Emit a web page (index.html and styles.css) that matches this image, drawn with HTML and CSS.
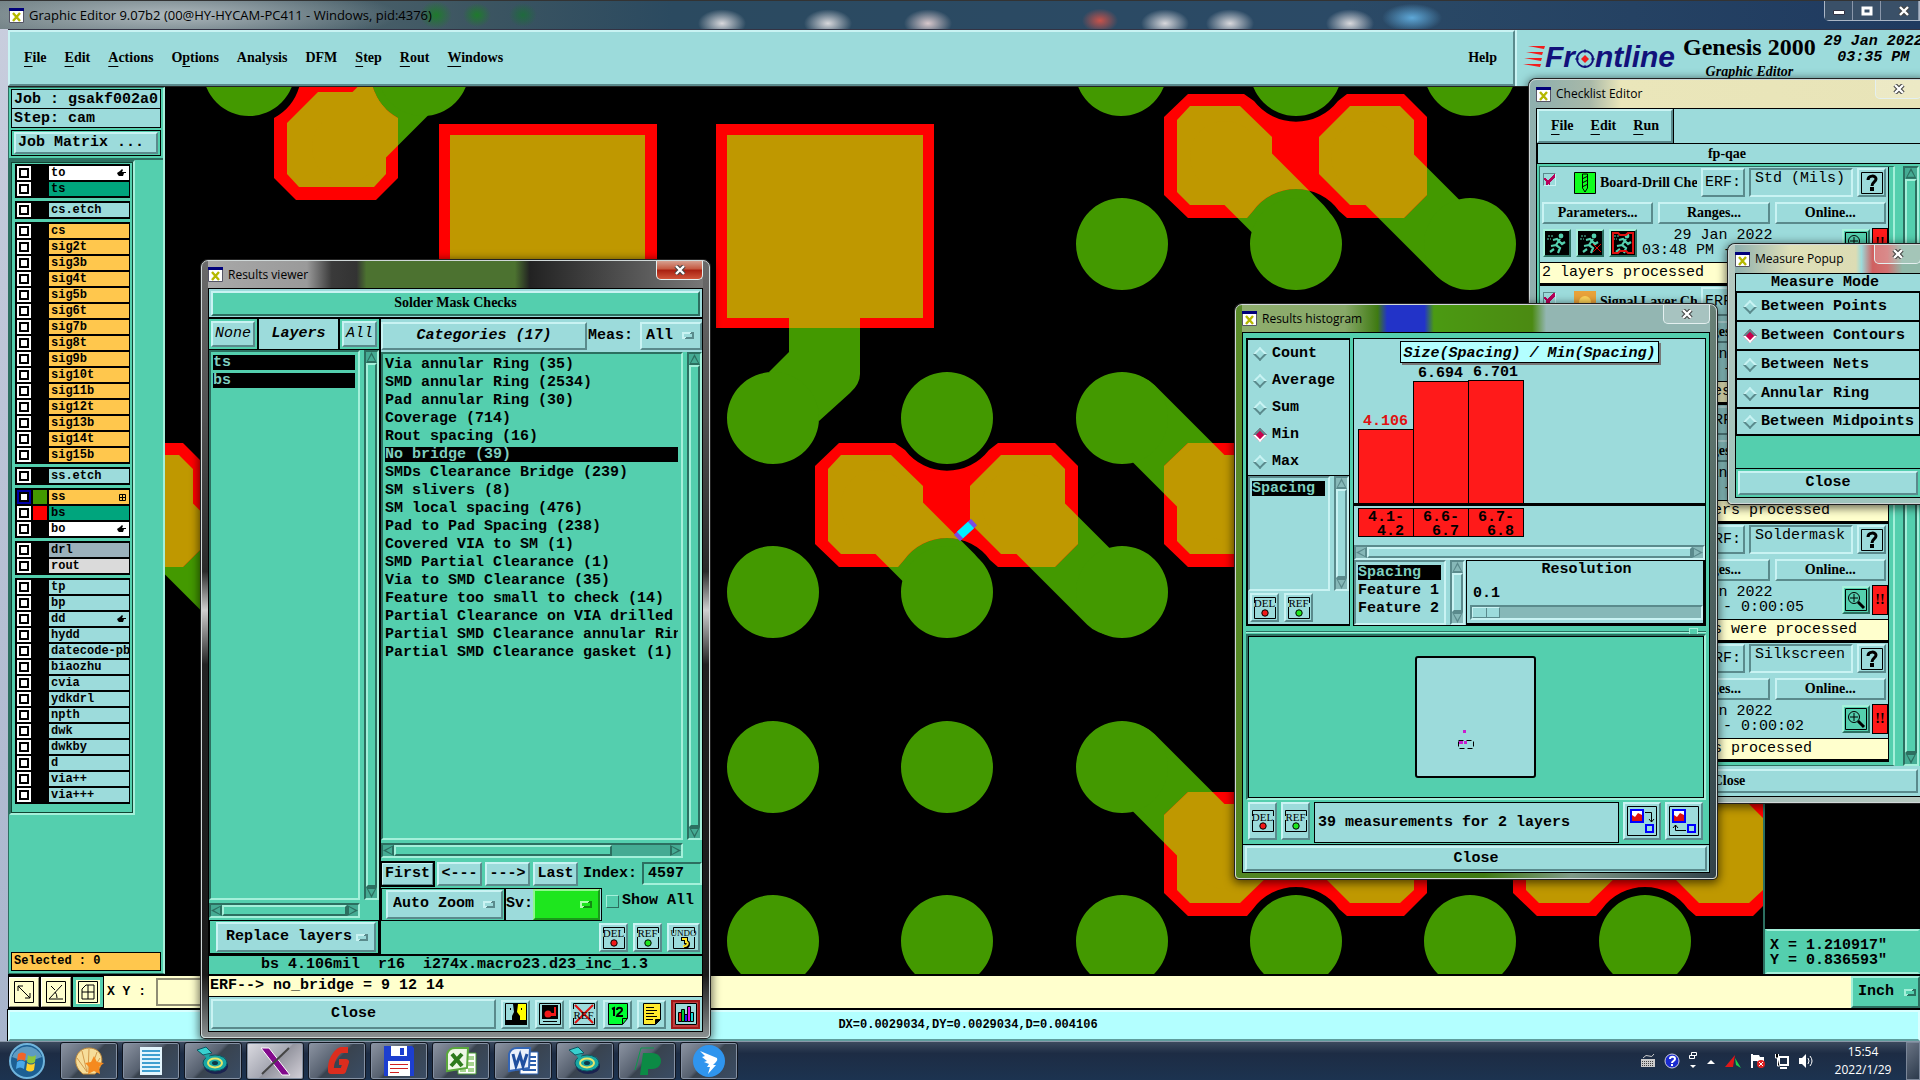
FILE: index.html
```html
<!DOCTYPE html>
<html lang="en">
<head>
    <meta charset="UTF-8">
    <meta name="viewport" content="width=device-width, initial-scale=1.0">
    <title>Graphic Editor 9.07b2</title>
    <link rel="stylesheet" href="styles.css">
</head>
<body>

    <!-- Shared icons -->
    <svg class="defs" aria-hidden="true">
        <symbol id="i-app" viewBox="0 0 15 15"><path fill="#fff" stroke="#556" d="M.5.5h14v14H.5z"/><path fill="#00007a" d="M0 0h15v3H0z"/><path stroke="#b5b800" stroke-width="2.4" d="M4 5l7 8M11 5l-7 8"/></symbol>
        <symbol id="i-x" viewBox="0 0 12 10"><path stroke="#444" stroke-width="4.5" d="M2 1l8 8M10 1L2 9"/><path stroke="#fff" stroke-width="2.4" d="M2 1l8 8M10 1L2 9"/></symbol>
        <symbol id="i-hand" viewBox="0 0 9 8"><path d="M0 4l3-2 2-2 1 1-1 2h4v1H7l-1 3H2L1 6z"/></symbol>
        <symbol id="i-grid" viewBox="0 0 7 7"><path fill="none" stroke="#000" d="M.5.5h6v6h-6zM3.5 0v7M0 3.5h7"/></symbol>
        <symbol id="i-dot" viewBox="0 0 22 22"><path fill="none" stroke="#000" d="M.5 6V.5h21V6M.5 10v11.5h21V10"/><circle cx="11" cy="16" r="3.2" fill="currentColor" stroke="#000"/></symbol>
        <symbol id="i-undo" viewBox="0 0 22 22"><path fill="none" stroke="#000" d="M.5 6V.5h21V6M.5 10v11.5h21V10"/><path fill="none" stroke="#000" stroke-width="4" d="M8 12h5v3c3 0 3 5-2 5"/><path fill="none" stroke="#ffe92e" stroke-width="2" d="M9 12h4v3c3 0 2 5-3 4"/></symbol>
        <symbol id="i-q" viewBox="0 0 22 22"><path fill="none" stroke="#000" d="M.5.5h21v21H.5z"/><path fill="none" stroke="#000" stroke-width="3" d="M7 8c0-5 8-5 8-1 0 3-4 3-4 7"/><path d="M9 15h4v4H9z"/></symbol>
        <symbol id="i-zoom" viewBox="0 0 22 22"><path fill="none" stroke="#000" d="M.5.5h21v21H.5z"/><circle cx="9" cy="9" r="5.5" fill="none" stroke="#000"/><path stroke="#000" d="M9 5v8M5 9h8"/><path stroke="#000" stroke-width="3" d="M13 13l6 6"/></symbol>
        <symbol id="i-run" viewBox="0 0 24 24"><path d="M0 0h24v24H0z"/><path fill="none" stroke="#54cfae" stroke-width="2.2" d="M15 8l-4 6-5 1M11 14l4 3-2 5M8 9l4-1 5 5 3-2M9 18l-4 3"/><circle cx="16" cy="5" r="2.4" fill="#54cfae"/><path stroke="#54cfae" stroke-dasharray="2 1" d="M3 5h6M2 8h4"/></symbol>
        <symbol id="i-run-sel" viewBox="0 0 24 24"><use href="#i-run"/><path stroke="#d00" fill="none" d="M15 13l8 8M23 13l-8 8"/></symbol>
        <symbol id="i-run-prof" viewBox="0 0 24 24"><use href="#i-run"/><path stroke="#e01010" fill="none" stroke-width="2" d="M2 2h5l2 2h6l2-2h5v20h-5l-2-2H9l-2 2H2z"/></symbol>
        <symbol id="i-drill" viewBox="0 0 22 22"><path fill="#0fff1d" stroke="#000" d="M.5.5h21v21H.5z"/><path fill="none" stroke="#000" d="M8.500 2h5v14l-2.500 4-2.500-4zM8 7l6-3M8 11l6-3M8 15l6-3"/></symbol>
        <symbol id="i-cd" viewBox="0 0 34 30"><ellipse cx="20" cy="20" rx="12" ry="8" fill="#1b2350"/><ellipse cx="19" cy="17" rx="12" ry="8" fill="#19a7a5" stroke="#0c5560"/><ellipse cx="19" cy="17" rx="7" ry="4.500" fill="none" stroke="#e6e66a" stroke-width="2"/><ellipse cx="19" cy="17" rx="3" ry="2" fill="#0c3a48"/><path fill="#38d0cf" stroke="#0c5560" d="M1 4l9-3 6 6-9 2z"/><path fill="#19a7a5" d="M8 9l6-1-2 6z"/></symbol>
    </svg>

    <main class="editor">
        <header class="titlebar">
            <svg class="app-icon"><use href="#i-app"/></svg>
            <span class="title-text">Graphic Editor 9.07b2 (00@HY-HYCAM-PC411 - Windows, pid:4376)</span>
            <div class="controls">
                <button type="button" aria-label="Minimize"><svg width="12" height="10"><path fill="#fff" stroke="#334" d="M.5 4.500h11v4H.5z"/></svg></button>
                <button type="button" aria-label="Maximize"><svg width="12" height="10"><path fill="none" stroke="#fff" stroke-width="3" d="M2 2h8v6H2z"/></svg></button>
                <button type="button" aria-label="Close"><svg width="12" height="10"><use href="#i-x"/></svg></button>
            </div>
        </header>

        <div class="topbar">
            <nav class="menubar">
                <a href="#"><u>F</u>ile</a>
                <a href="#"><u>E</u>dit</a>
                <a href="#"><u>A</u>ctions</a>
                <a href="#">O<u>p</u>tions</a>
                <a href="#">Analysis</a>
                <a href="#">DFM</a>
                <a href="#"><u>S</u>tep</a>
                <a href="#"><u>R</u>out</a>
                <a href="#"><u>W</u>indows</a>
                <a href="#" class="help">Help</a>
            </nav>
            <div class="brand">
                <div class="logo">
                    <svg width="22" height="24"><path fill="#f21c1c" d="M5 1h17l-1 3zM3 7h17l-1 3zM1 13h18l-1 3zM0 19h18l-1 3z"/></svg>
                    <span>Fr</span>
                    <svg class="target" width="20" height="22"><circle cx="10" cy="13" r="8" fill="none" stroke="#11117a" stroke-width="2"/><path stroke="#11117a" d="M10 3v19M0 13h20"/><circle cx="10" cy="13" r="6" fill="#9cdbdb"/><path fill="#f21c1c" d="M10 9l4 4-4 4-4-4z"/></svg>
                    <span>ntline</span>
                </div>
                <div class="product">
                    <strong>Genesis 2000</strong>
                    <em>Graphic Editor</em>
                </div>
                <div class="stamp">29 Jan 2022<br>03:35 PM</div>
            </div>
        </div>

        <div class="workspace">
            <aside class="sidebar">
                <div class="job-info">
                    <div class="job-line">Job : gsakf002a0</div>
                    <div class="job-line">Step: cam</div>
                    <div class="matrix-box"><button type="button" class="raised">Job Matrix ...</button></div>
                </div>
                <div class="layers">
                    <div class="group">
                        <label class="white"><input type="checkbox"><i></i><span>to</span><svg width="9" height="8"><use href="#i-hand"/></svg></label>
                        <label class="mask"><input type="checkbox"><i></i><span>ts</span></label>
                    </div>
                    <div class="group">
                        <label><input type="checkbox"><i></i><span>cs.etch</span></label>
                    </div>
                    <div class="group signal">
                        <label><input type="checkbox"><i></i><span>cs</span></label>
                        <label><input type="checkbox"><i></i><span>sig2t</span></label>
                        <label><input type="checkbox"><i></i><span>sig3b</span></label>
                        <label><input type="checkbox"><i></i><span>sig4t</span></label>
                        <label><input type="checkbox"><i></i><span>sig5b</span></label>
                        <label><input type="checkbox"><i></i><span>sig6t</span></label>
                        <label><input type="checkbox"><i></i><span>sig7b</span></label>
                        <label><input type="checkbox"><i></i><span>sig8t</span></label>
                        <label><input type="checkbox"><i></i><span>sig9b</span></label>
                        <label><input type="checkbox"><i></i><span>sig10t</span></label>
                        <label><input type="checkbox"><i></i><span>sig11b</span></label>
                        <label><input type="checkbox"><i></i><span>sig12t</span></label>
                        <label><input type="checkbox"><i></i><span>sig13b</span></label>
                        <label><input type="checkbox"><i></i><span>sig14t</span></label>
                        <label><input type="checkbox"><i></i><span>sig15b</span></label>
                    </div>
                    <div class="group">
                        <label><input type="checkbox"><i></i><span>ss.etch</span></label>
                    </div>
                    <div class="group">
                        <label class="orange"><input type="checkbox" checked><i class="on-green"></i><span>ss</span><svg width="7" height="7"><use href="#i-grid"/></svg></label>
                        <label class="mask"><input type="checkbox"><i class="on-red"></i><span>bs</span></label>
                        <label class="white"><input type="checkbox"><i></i><span>bo</span><svg width="9" height="8"><use href="#i-hand"/></svg></label>
                    </div>
                    <div class="group">
                        <label class="drill"><input type="checkbox"><i></i><span>drl</span></label>
                        <label class="rout"><input type="checkbox"><i></i><span>rout</span></label>
                    </div>
                    <div class="group">
                        <label><input type="checkbox"><i></i><span>tp</span></label>
                        <label><input type="checkbox"><i></i><span>bp</span></label>
                        <label><input type="checkbox"><i></i><span>dd</span><svg width="9" height="8"><use href="#i-hand"/></svg></label>
                        <label><input type="checkbox"><i></i><span>hydd</span></label>
                        <label><input type="checkbox"><i></i><span>datecode-pbd</span></label>
                        <label><input type="checkbox"><i></i><span>biaozhu</span></label>
                        <label><input type="checkbox"><i></i><span>cvia</span></label>
                        <label><input type="checkbox"><i></i><span>ydkdrl</span></label>
                        <label><input type="checkbox"><i></i><span>npth</span></label>
                        <label><input type="checkbox"><i></i><span>dwk</span></label>
                        <label><input type="checkbox"><i></i><span>dwkby</span></label>
                        <label><input type="checkbox"><i></i><span>d</span></label>
                        <label><input type="checkbox"><i></i><span>via++</span></label>
                        <label><input type="checkbox"><i></i><span>via+++</span></label>
                    </div>
                </div>
                <div class="selected">Selected : 0</div>
            </aside>

            <!-- Board canvas -->
            <svg class="board" viewBox="165 87 1599 887" preserveAspectRatio="xMinYMin slice">
                <defs>
                    <path id="pair" d="M24 0H80L90 7A53 53 0 0 0 174 7L183 0H240L263 23V101L240 124H183L175 117A53 53 0 0 0 89 117L83 124H24L0 101V23Z"/>
                    <path id="pads" d="M26 12H76L108 43V80L76 111H26L13 98V26ZM186 12H236L250 26V98L236 111H186L155 80V43Z"/>
                    <path id="single" d="M296 200H376L398 178V118A53 53 0 0 1 372 84H300A53 53 0 0 1 274 118V178Z"/>
                    <path id="smds" d="M439 124H657V328H439ZM716 124H934V328H716Z"/>
                    <g id="copper">
                        <path d="M450 135H645V318H450ZM727 135H923V318H727Z"/>
                        <path d="M789 310H860V374Q860 384 850 393L819 421L769 372L789 352Z"/>
                        <path d="M287 123L318 92H386V174L374 187H299L287 174Z"/>
                        <use href="#pads" x="815" y="443"/>
                        <use href="#pads" x="-57" y="443"/>
                        <use href="#pads" x="1164" y="94"/>
                        <use href="#pads" x="1164" y="443"/>
                        <use href="#pads" x="1164" y="792"/>
                        <use href="#pads" x="1513" y="792"/>
                        <path class="trace" d="M347 147L425 69M876 505L950 579M1017 505L1112 600M1225 156L1299 230M1366 156L1461 251M145 505L240 600M1225 505L1130 410M1225 854L1130 759"/>
                        <path class="via" d="M249 70h0M423 70h0M1121 70h0M1296 70h0M1470 70h0M1122 244h0M1296 244h0M1470 244h0M773 418h0M947 418h0M1122 418h0M773 592h0M947 592h0M1122 592h0M773 767h0M947 767h0M1122 767h0M773 941h0M947 941h0M1122 941h0M1296 941h0M1470 941h0M1645 941h0"/>
                    </g>
                    <clipPath id="openings">
                        <use href="#single"/>
                        <use href="#smds"/>
                        <use href="#pair" x="815" y="443"/>
                        <use href="#pair" x="-57" y="443"/>
                        <use href="#pair" x="1164" y="94"/>
                        <use href="#pair" x="1164" y="443"/>
                        <use href="#pair" x="1164" y="792"/>
                        <use href="#pair" x="1513" y="792"/>
                    </clipPath>
                </defs>
                <path fill="#000" d="M165 86H1764V974H165z"/>
                <use href="#copper" class="c-green"/>
                <g clip-path="url(#openings)">
                    <path fill="#f00" d="M165 86H1764V974H165z"/>
                    <use href="#copper" class="c-gold"/>
                </g>
                <path stroke="#7a4be0" stroke-width="9" d="M957 538L974 522"/>
                <path stroke="#00f0ff" stroke-width="9" d="M960 535L971 525"/>
            </svg>

            <aside class="overview">
                <div class="coords">X = 1.210917"<br>Y = 0.836593"</div>
            </aside>
        </div>

        <div class="command">
            <button type="button" class="tool" aria-label="Snap"><svg width="20" height="22"><path fill="none" stroke="#000" d="M.5.5h19v21H.5zM4 5l12 12M4 10V5h5M11 17h5v-5"/></svg></button>
            <button type="button" class="tool" aria-label="Angle"><svg width="20" height="22"><path fill="none" stroke="#000" d="M.5.5h19v21H.5zM3 18L16 4M3 18h14M5 5l4 4M11 17q0-4-2-6"/></svg></button>
            <button type="button" class="tool active" aria-label="Grid"><svg width="20" height="22"><path fill="none" stroke="#000" d="M.5.5h19v21H.5zM4 8l4-4h8v14H4zM10 4v14M4 11h12"/></svg></button>
            <label class="xy" for="xy">X Y :</label>
            <input id="xy" class="xy-input" type="text">
            <select class="opt green" aria-label="Units"><option>Inch</option></select>
        </div>
        <div class="status">DX=0.0029034,DY=0.0029034,D=0.004106</div>
    </main>

    <!-- Checklist editor -->
    <section class="window checklist">
        <header class="win-title">
            <svg class="app-icon"><use href="#i-app"/></svg><span>Checklist Editor</span>
            <button type="button" class="win-close" aria-label="Close"><svg width="12" height="10"><use href="#i-x"/></svg></button>
        </header>
        <div class="win-body">
            <nav class="check-menu raised">
                <a href="#"><u>F</u>ile</a>
                <a href="#"><u>E</u>dit</a>
                <a href="#"><u>R</u>un</a>
            </nav>
            <div class="check-name">fp-qae</div>
            <div class="check-main">
                <div class="check-list">
                    <article class="check">
                        <div class="check-head">
                            <input type="checkbox" checked aria-label="Board-Drill Checks">
                            <svg width="22" height="22"><use href="#i-drill"/></svg>
                            <b>Board-Drill Checks</b>
                            <button type="button" class="raised erf">ERF:</button>
                            <input type="text" class="sunken" value="Std (Mils)" aria-label="ERF model">
                            <button type="button" class="raised icon" aria-label="Help"><svg width="22" height="22"><use href="#i-q"/></svg></button>
                        </div>
                        <div class="check-buttons"><button type="button" class="raised">Parameters...</button><button type="button" class="raised">Ranges...</button><button type="button" class="raised">Online...</button></div>
                        <div class="check-status">
                            <button type="button" class="raised run" aria-label="Run"><svg width="24" height="24"><use href="#i-run"/></svg></button>
                            <button type="button" class="raised run" aria-label="Run on selected"><svg width="24" height="24"><use href="#i-run-sel"/></svg></button>
                            <button type="button" class="raised run" aria-label="Run in profile"><svg width="24" height="24"><use href="#i-run-prof"/></svg></button>
                            <p>29 Jan 2022<br>03:48 PM - 0:00:01</p>
                            <button type="button" class="raised run" aria-label="Results"><svg width="22" height="22"><use href="#i-zoom"/></svg></button>
                            <mark>!!</mark>
                        </div>
                        <div class="check-msg">2 layers processed</div>
                    </article>
                    <article class="check">
                        <div class="check-head">
                            <input type="checkbox" checked aria-label="Signal Layer Checks">
                            <svg width="22" height="22"><path fill="#e9a23a" d="M0 0h22v22H0z"/><circle cx="11" cy="11" r="6" fill="#ffd45a"/></svg>
                            <b>Signal Layer Checks</b>
                            <button type="button" class="raised erf">ERF:</button>
                            <input type="text" class="sunken" value="Outers" aria-label="ERF model">
                            <button type="button" class="raised icon" aria-label="Help"><svg width="22" height="22"><use href="#i-q"/></svg></button>
                        </div>
                        <div class="check-buttons"><button type="button" class="raised">Parameters...</button><button type="button" class="raised">Ranges...</button><button type="button" class="raised">Online...</button></div>
                        <div class="check-status">
                            <button type="button" class="raised run" aria-label="Run"><svg width="24" height="24"><use href="#i-run"/></svg></button>
                            <button type="button" class="raised run" aria-label="Run on selected"><svg width="24" height="24"><use href="#i-run-sel"/></svg></button>
                            <button type="button" class="raised run" aria-label="Run in profile"><svg width="24" height="24"><use href="#i-run-prof"/></svg></button>
                            <p>29 Jan 2022<br>03:48 PM - 0:00:09</p>
                            <button type="button" class="raised run" aria-label="Results"><svg width="22" height="22"><use href="#i-zoom"/></svg></button>
                            <mark>!!</mark>
                        </div>
                        <div class="check-msg">16 layers, 0 failures</div>
                    </article>
                    <article class="check">
                        <div class="check-head">
                            <input type="checkbox" checked aria-label="Power Ground Checks">
                            <svg width="22" height="22"><path fill="#e9a23a" d="M0 0h22v22H0z"/></svg>
                            <b>Power/Ground Checks</b>
                            <button type="button" class="raised erf">ERF:</button>
                            <input type="text" class="sunken" value="Mixed" aria-label="ERF model">
                            <button type="button" class="raised icon" aria-label="Help"><svg width="22" height="22"><use href="#i-q"/></svg></button>
                        </div>
                        <div class="check-buttons"><button type="button" class="raised">Parameters...</button><button type="button" class="raised">Ranges...</button><button type="button" class="raised">Online...</button></div>
                        <div class="check-status">
                            <button type="button" class="raised run" aria-label="Run"><svg width="24" height="24"><use href="#i-run"/></svg></button>
                            <button type="button" class="raised run" aria-label="Run on selected"><svg width="24" height="24"><use href="#i-run-sel"/></svg></button>
                            <button type="button" class="raised run" aria-label="Run in profile"><svg width="24" height="24"><use href="#i-run-prof"/></svg></button>
                            <p>29 Jan 2022<br>03:48 PM - 0:00:03</p>
                            <button type="button" class="raised run" aria-label="Results"><svg width="22" height="22"><use href="#i-zoom"/></svg></button>
                            <mark>!!</mark>
                        </div>
                        <div class="check-msg">No power/ground layers processed</div>
                    </article>
                    <article class="check">
                        <div class="check-head">
                            <input type="checkbox" checked aria-label="Solder Mask Checks">
                            <svg width="22" height="22"><path fill="#439900" d="M0 0h22v22H0z"/></svg>
                            <b>Solder Mask Checks</b>
                            <button type="button" class="raised erf">ERF:</button>
                            <input type="text" class="sunken" value="Soldermask" aria-label="ERF model">
                            <button type="button" class="raised icon" aria-label="Help"><svg width="22" height="22"><use href="#i-q"/></svg></button>
                        </div>
                        <div class="check-buttons"><button type="button" class="raised">Parameters...</button><button type="button" class="raised">Ranges...</button><button type="button" class="raised">Online...</button></div>
                        <div class="check-status">
                            <button type="button" class="raised run" aria-label="Run"><svg width="24" height="24"><use href="#i-run"/></svg></button>
                            <button type="button" class="raised run" aria-label="Run on selected"><svg width="24" height="24"><use href="#i-run-sel"/></svg></button>
                            <button type="button" class="raised run" aria-label="Run in profile"><svg width="24" height="24"><use href="#i-run-prof"/></svg></button>
                            <p>29 Jan 2022<br>03:52 PM - 0:00:05</p>
                            <button type="button" class="raised run" aria-label="Results"><svg width="22" height="22"><use href="#i-zoom"/></svg></button>
                            <mark>!!</mark>
                        </div>
                        <div class="check-msg">2 solder mask layers were processed</div>
                    </article>
                    <article class="check">
                        <div class="check-head">
                            <input type="checkbox" checked aria-label="Silk Screen Checks">
                            <svg width="22" height="22"><path fill="#fff" d="M0 0h22v22H0z"/></svg>
                            <b>Silk Screen Checks</b>
                            <button type="button" class="raised erf">ERF:</button>
                            <input type="text" class="sunken" value="Silkscreen" aria-label="ERF model">
                            <button type="button" class="raised icon" aria-label="Help"><svg width="22" height="22"><use href="#i-q"/></svg></button>
                        </div>
                        <div class="check-buttons"><button type="button" class="raised">Parameters...</button><button type="button" class="raised">Ranges...</button><button type="button" class="raised">Online...</button></div>
                        <div class="check-status">
                            <button type="button" class="raised run" aria-label="Run"><svg width="24" height="24"><use href="#i-run"/></svg></button>
                            <button type="button" class="raised run" aria-label="Run on selected"><svg width="24" height="24"><use href="#i-run-sel"/></svg></button>
                            <button type="button" class="raised run" aria-label="Run in profile"><svg width="24" height="24"><use href="#i-run-prof"/></svg></button>
                            <p>29 Jan 2022<br>03:52 PM - 0:00:02</p>
                            <button type="button" class="raised run" aria-label="Results"><svg width="22" height="22"><use href="#i-zoom"/></svg></button>
                            <mark>!!</mark>
                        </div>
                        <div class="check-msg">2 silk screen layers processed</div>
                    </article>
                </div>
                <div class="scroll-y"><b></b></div>
            </div>
            <div class="check-close"><button type="button" class="raised">Close</button></div>
        </div>
    </section>

    <!-- Measure popup -->
    <section class="window measure">
        <header class="win-title">
            <svg class="app-icon"><use href="#i-app"/></svg><span>Measure Popup</span>
            <button type="button" class="win-close" aria-label="Close"><svg width="12" height="10"><use href="#i-x"/></svg></button>
        </header>
        <div class="win-body">
            <div class="measure-head">Measure Mode</div>
            <div class="measure-list">
                <label><input type="radio" name="mode">Between Points</label>
                <label><input type="radio" name="mode" checked>Between Contours</label>
                <label><input type="radio" name="mode">Between Nets</label>
                <label><input type="radio" name="mode">Annular Ring</label>
                <label><input type="radio" name="mode">Between Midpoints</label>
            </div>
            <div class="measure-close"><button type="button" class="raised">Close</button></div>
        </div>
    </section>

    <!-- Results histogram -->
    <section class="window histogram">
        <header class="win-title">
            <svg class="app-icon"><use href="#i-app"/></svg><span>Results histogram</span>
            <button type="button" class="win-close" aria-label="Close"><svg width="12" height="10"><use href="#i-x"/></svg></button>
        </header>
        <div class="win-body">
            <div class="hist-top">
                <div class="hist-left">
                    <div class="hist-radios">
                        <label><input type="radio" name="stat">Count</label>
                        <label><input type="radio" name="stat">Average</label>
                        <label><input type="radio" name="stat">Sum</label>
                        <label><input type="radio" name="stat" checked>Min</label>
                        <label><input type="radio" name="stat">Max</label>
                    </div>
                    <div class="hist-list">
                        <ul class="listbox"><li class="sel">Spacing</li></ul>
                        <div class="scroll-y"><b></b></div>
                    </div>
                    <div class="icon-row">
                        <button type="button" class="raised icon tagged red"><svg width="22" height="22"><use href="#i-dot"/></svg><span>DEL</span></button>
                        <button type="button" class="raised icon tagged lime"><svg width="22" height="22"><use href="#i-dot"/></svg><span>REF</span></button>
                    </div>
                </div>
                <div class="hist-right">
                    <div class="chart">
                        <div class="chart-title">Size(Spacing) / Min(Spacing)</div>
                        <div class="bars">
                            <div class="bar current"><span>4.106</span><i style="height:74px"></i></div>
                            <div class="bar"><span>6.694</span><i style="height:122px"></i></div>
                            <div class="bar"><span>6.701</span><i style="height:123px"></i></div>
                        </div>
                        <div class="ranges">
                            <div>4.1-<br><span>4.2</span></div>
                            <div>6.6-<br><span>6.7</span></div>
                            <div>6.7-<br><span>6.8</span></div>
                        </div>
                        <div class="scroll-x"><b></b></div>
                    </div>
                    <div class="hist-opts">
                        <ul class="listbox"><li class="sel">Spacing</li><li>Feature 1</li><li>Feature 2</li></ul>
                        <div class="scroll-y"><b></b></div>
                        <div class="resolution">
                            <label for="res">Resolution</label>
                            <output for="res">0.1</output>
                            <input id="res" type="range" min="0" max="10" step="0.1" value="0">
                        </div>
                    </div>
                </div>
            </div>
            <div class="sash"><i></i></div>
            <div class="hist-map">
                <svg width="122" height="122"><rect x="1" y="1" width="119" height="120" rx="2" fill="#9cdbdb" stroke="#000" stroke-width="2"/><path fill="#c81ed0" d="M48 74h3v3h-3zM44 85h4v3h-4zM49 85h3v3h-3z"/><path fill="none" stroke="#000" stroke-dasharray="5 3" d="M43.500 84.500h15v8h-15z"/></svg>
            </div>
            <div class="hist-foot">
                <button type="button" class="raised icon tagged red"><svg width="22" height="22"><use href="#i-dot"/></svg><span>DEL</span></button>
                <button type="button" class="raised icon tagged lime"><svg width="22" height="22"><use href="#i-dot"/></svg><span>REF</span></button>
                <div class="hist-info">39 measurements for 2 layers</div>
                <button type="button" class="raised icon" aria-label="Copy to view"><svg width="30" height="30"><path fill="none" stroke="#000" d="M.5.5h29v29H.5z"/><path fill="#fff" stroke="#00f" stroke-width="2" d="M4 4h12v12H4z"/><path fill="#e01010" d="M5 9l3 2 3-4 4 2v6H5z"/><path fill="none" stroke="#00f" stroke-width="2" d="M19 19h7v7h-7z"/><path fill="none" stroke="#000" d="M18 6.500h6.500V16M22 13l2.500 3 2.500-3"/></svg></button>
                <button type="button" class="raised icon" aria-label="Copy from view"><svg width="30" height="30"><path fill="none" stroke="#000" d="M.5.5h29v29H.5z"/><path fill="#fff" stroke="#00f" stroke-width="2" d="M4 4h12v12H4z"/><path fill="#e01010" d="M5 9l3 2 3-4 4 2v6H5z"/><path fill="none" stroke="#00f" stroke-width="2" d="M19 19h7v7h-7z"/><path fill="none" stroke="#000" d="M17 24.500H6.500V19M4 22l2.500-3L9 22"/></svg></button>
            </div>
            <div class="hist-close"><button type="button" class="raised">Close</button></div>
        </div>
    </section>

    <!-- Results viewer -->
    <section class="window viewer">
        <header class="win-title">
            <svg class="app-icon"><use href="#i-app"/></svg><span>Results viewer</span>
            <button type="button" class="win-close danger" aria-label="Close"><svg width="12" height="10"><use href="#i-x"/></svg></button>
        </header>
        <div class="win-body">
            <div class="viewer-head"><div>Solder Mask Checks</div></div>
            <div class="viewer-cols">
                <div class="viewer-left">
                    <div class="left-tabs">
                        <div><button type="button" class="raised">None</button></div>
                        <strong>Layers</strong>
                        <div><button type="button" class="raised">All</button></div>
                    </div>
                    <div class="list-area">
                        <ul class="listbox"><li class="sel">ts</li><li class="sel">bs</li></ul>
                        <div class="scroll-y"><b></b></div>
                    </div>
                    <div class="scroll-x"><b></b></div>
                    <div class="replace"><select class="opt" aria-label="Layer mode"><option>Replace layers</option></select></div>
                </div>
                <div class="viewer-right">
                    <div class="right-tabs">
                        <button type="button" class="raised cats">Categories (17)</button>
                        <label for="meas">Meas:</label>
                        <select id="meas" class="opt"><option>All</option></select>
                    </div>
                    <div class="list-area">
                        <ul class="listbox">
                            <li>Via annular Ring (35)</li>
                            <li>SMD annular Ring (2534)</li>
                            <li>Pad annular Ring (30)</li>
                            <li>Coverage (714)</li>
                            <li>Rout spacing (16)</li>
                            <li class="sel">No bridge (39)</li>
                            <li>SMDs Clearance Bridge (239)</li>
                            <li>SM slivers (8)</li>
                            <li>SM local spacing (476)</li>
                            <li>Pad to Pad Spacing (238)</li>
                            <li>Covered VIA to SM (1)</li>
                            <li>SMD Partial Clearance (1)</li>
                            <li>Via to SMD Clearance (35)</li>
                            <li>Feature too small to check (14)</li>
                            <li>Partial Clearance on VIA drilled</li>
                            <li>Partial SMD Clearance annular Ring</li>
                            <li>Partial SMD Clearance gasket (1)</li>
                        </ul>
                        <div class="scroll-y"><b></b></div>
                    </div>
                    <div class="scroll-x"><b class="part"></b></div>
                    <div class="nav-row">
                        <button type="button" class="raised default">First</button>
                        <button type="button" class="raised">&lt;---</button>
                        <button type="button" class="raised">---&gt;</button>
                        <button type="button" class="raised">Last</button>
                        <label for="index">Index:</label>
                        <input id="index" class="sunken" type="text" value="4597">
                    </div>
                    <div class="zoom-row">
                        <div class="boxed"><select class="opt" aria-label="Zoom mode"><option>Auto Zoom</option></select></div>
                        <div class="boxed sv"><label for="sv">Sv:</label><select id="sv" class="opt lime-bg"><option></option></select></div>
                        <label class="show-all"><input type="checkbox">Show All</label>
                    </div>
                    <div class="icon-row end">
                        <button type="button" class="raised icon tagged red"><svg width="22" height="22"><use href="#i-dot"/></svg><span>DEL</span></button>
                        <button type="button" class="raised icon tagged lime"><svg width="22" height="22"><use href="#i-dot"/></svg><span>REF</span></button>
                        <button type="button" class="raised icon tagged wide"><svg width="22" height="22"><use href="#i-undo"/></svg><span>UNDO</span></button>
                    </div>
                </div>
            </div>
            <pre class="viewer-msg">bs 4.106mil  r16  i274x.macro23.d23_inc_1.3</pre>
            <div class="viewer-erf">ERF--&gt; no_bridge = 9 12 14</div>
            <div class="viewer-foot">
                <button type="button" class="raised close">Close</button>
                <button type="button" class="raised icon" aria-label="Compare"><svg width="22" height="22"><path fill="#ff0" d="M11 0h11v22H11z"/><path fill="none" stroke="#000" d="M.5.5h21v21H.5z"/><path d="M8 1h5l-1 8 3 4v4h7v5H0v-5h7v-4l2-4zM5 5h1v2H5zM16 5h1v2h-1z"/></svg></button>
                <button type="button" class="raised icon" aria-label="Camera"><svg width="22" height="22"><path fill="none" stroke="#000" d="M.5.5h21v21H.5z"/><path d="M3 2h16v14H3zM4 18h14v1H4z"/><circle cx="9" cy="11" r="3.500" fill="#f01818"/><path fill="#f01818" d="M15 4h2v9h-5v-3h3z"/></svg></button>
                <button type="button" class="raised icon tagged mid" aria-label="No reference"><svg width="22" height="22"><path fill="none" stroke="#000" d="M.5 6V.5h21V6M.5 15v6.500h21V15"/><path stroke="#e01010" stroke-width="2" d="M2 2l18 18M20 2L2 20"/></svg><span>REF</span></button>
                <button type="button" class="raised icon" aria-label="Count"><svg width="22" height="22"><path fill="#0f3" stroke="#000" d="M1.500.5h19v15l-5 6h-14z"/><path fill="none" stroke="#000" stroke-width="2" d="M5 6l2-1v8M10 7c0-3 5-3 5 0 0 2-4 3-5 6h6"/><path fill="none" stroke="#000" d="M20 15.500h-4.500V21"/></svg></button>
                <button type="button" class="raised icon" aria-label="Report"><svg width="22" height="22"><path fill="#ffe92e" stroke="#000" d="M2.500.5h17v16l-5 5h-12z"/><path stroke="#000" d="M5 4.500h8M5 7.500h11M5 10.500h8M5 13.500h11M5 16.500h7M14.500 21v-4.500h5"/></svg></button>
                <button type="button" class="raised icon pressed" aria-label="Histogram"><svg width="22" height="22"><path fill="none" stroke="#000" d="M.5.5h21v21H.5z"/><path fill="#f01818" stroke="#000" d="M3.500 9.500h3v9h-3z"/><path fill="#0c3" stroke="#000" d="M6.500 6.500h3v12h-3z"/><path fill="#22f" stroke="#000" d="M9.500 11.500h3v7h-3z"/><path fill="#e010e0" stroke="#000" d="M12.500 3.500h3v15h-3z"/><path fill="#1dd" stroke="#000" d="M15.500 9.500h3v9h-3z"/></svg></button>
            </div>
        </div>
    </section>

    <footer class="taskbar">
        <button type="button" class="start" aria-label="Start"><svg width="38" height="38"><circle cx="19" cy="19" r="17" fill="#1c5f93" stroke="#6fb4dc" stroke-width="2"/><path fill="#9fd8f2" opacity=".5" d="M4 15a16 16 0 0 1 30 0Q19 22 4 15"/><path fill="#f0642a" d="M10 12q4-3 8 0l-1 7q-4-3-8 0z"/><path fill="#8cc63c" d="M20 13q4 3 8 0l-1 7q-4 3-8 0z"/><path fill="#4aa8e8" d="M9 20q4-3 8 0l-1 7q-4-3-8 0z"/><path fill="#ffd028" d="M19 21q4 3 8 0l-1 7q-4 3-8 0z"/></svg></button>
        <nav class="tasks">
            <button type="button" aria-label="Shell"><svg width="34" height="30"><path fill="#f6dd9a" stroke="#c08a3a" d="M17 28h-6C-2 18 4 2 17 2s18 14 6 26z"/><path stroke="#d39b4e" d="M15 26L5 12M15 26L10 5M16 26l1-23M18 26l7-20M19 26l9-14"/><path fill="#f58a1f" d="M22 10l3 6 7 1-5 4 1 7-6-3-6 3 1-7-4-4 6-1z"/></svg></button>
            <button type="button" aria-label="Notepad"><svg width="34" height="30"><path fill="#e3f5fd" d="M6 1h22v28H6z"/><path stroke="#3f9fd0" stroke-width="2" d="M8 5h18M8 9h18M8 13h18M8 17h18M8 21h18M8 25h18"/></svg></button>
            <button type="button" aria-label="Genesis"><svg width="34" height="30"><use href="#i-cd"/></svg></button>
            <button type="button" class="on" aria-label="Exceed"><svg width="34" height="30"><path fill="#820a8c" stroke="#fff" d="M3 2h8l21 27h-8z"/><path stroke="#444" stroke-width="2" d="M31 2L4 28"/></svg></button>
            <button type="button" aria-label="G"><svg width="34" height="30"><path fill="none" stroke="#dc2d1e" stroke-width="6" stroke-linejoin="round" d="M28 4h-7c-5 2-11 11-10 21h12l3-9h-7"/></svg></button>
            <button type="button" aria-label="Total Commander"><svg width="34" height="30"><path fill="#1d3fd0" d="M2 0h28l2 2v28H2z"/><path fill="#fff" d="M9 0h16v10H9zM6 15h22v15H6z"/><path fill="#1d3fd0" d="M18 2h4v7h-4z"/><path stroke="#d02020" d="M8 18.500h18M8 22.500h18M8 26.500h9"/></svg></button>
            <button type="button" aria-label="Excel"><svg width="34" height="30"><path fill="#fff" stroke="#4b9a35" d="M14 7h18v21H14z"/><path fill="#a6d48f" d="M21 10h9v4h-9zM21 16h9v4h-9zM16 22h6v4h-6zM24 22h6v4h-6z"/><path fill="#eef7e6" stroke="#5aa83c" stroke-width="2" d="M3 8q2-6 8-6h13l-1 20-20 3z"/><path stroke="#2d7a1d" stroke-width="4" d="M8 8l10 12M18 8L7 20"/></svg></button>
            <button type="button" aria-label="Word"><svg width="34" height="30"><path fill="#fff" stroke="#2b5fad" d="M14 6h18v22H14z"/><path stroke="#2b5fad" stroke-width="2" d="M24 11h6M24 15h6M24 19h6M17 24h13"/><path fill="#eaf1fb" stroke="#3465b4" stroke-width="2" d="M3 8q2-6 8-6h13l-1 20-20 3z"/><path fill="none" stroke="#1f4f9f" stroke-width="3" d="M7 8l3 12 4-11 3 11 4-12"/></svg></button>
            <button type="button" aria-label="Genesis 2"><svg width="34" height="30"><use href="#i-cd"/></svg></button>
            <button type="button" aria-label="P"><svg width="34" height="30"><path fill="none" stroke="#0c9a4d" d="M5 24L11 2h13"/><path fill="#0c8a45" d="M13 7h9c12 0 12 16 0 16h-4v6h-8z"/></svg></button>
            <button type="button" aria-label="DingTalk"><svg width="34" height="34"><circle cx="17" cy="17" r="16" fill="#2f95ee"/><path fill="#fff" d="M8 7l17 7q1 2-1 4l-3 3h3l-8 9 2-7h-3l2-3-5-2 3-1-5-4 3-1z"/></svg></button>
        </nav>
        <div class="tray">
            <svg width="16" height="16"><path fill="#ccc" d="M1 6h14v8H1z"/><path stroke="#444" stroke-dasharray="1 1" d="M2 8.500h12M2 10.500h12M2 12.500h12"/><path fill="none" stroke="#ccc" d="M3 5q3-4 6-2t5-2"/></svg>
            <svg width="16" height="16"><circle cx="8" cy="8" r="7" fill="#1a2bd0" stroke="#ccd"/><path fill="none" stroke="#fff" stroke-width="2" d="M6 6c0-3 5-3 5 0 0 2-3 2-3 4M8 11v2"/></svg>
            <svg width="10" height="20"><path fill="none" stroke="#fff" d="M3.500 1.500h5v3h-5zM1.500 4.500h5v3h-5z"/><path fill="#fff" d="M2 14h6l-3 3z"/></svg>
            <svg width="10" height="16"><path fill="#fff" d="M1 11h8L5 7z"/></svg>
            <svg width="18" height="16"><path fill="#e01818" d="M1 14L11 2l-2 12z"/><path fill="#1fd048" d="M11 5l6 10-5-3z"/></svg>
            <svg width="16" height="16"><path stroke="#fff" stroke-width="2" d="M2 1v14"/><path fill="#fff" d="M3 2h6l1 2h4v5H8L7 8H3z"/><circle cx="11" cy="11" r="4" fill="#e02020"/><path stroke="#fff" d="M9 9l4 4M13 9l-4 4"/></svg>
            <svg width="16" height="16"><path fill="none" stroke="#fff" stroke-width="2" d="M5 4h9v8H5zM6 15h7"/><path stroke="#fff" d="M1.500 1v4h3V1M3.500 5v8h2"/></svg>
            <svg width="16" height="16"><path fill="#fff" d="M1 5h3l4-4v14l-4-4H1z"/><path fill="none" stroke="#fff" d="M10 5q2 3 0 6M12 3q4 5 0 10"/></svg>
            <time>15:54<br>2022/1/29</time>
            <i class="peek"></i>
        </div>
    </footer>

</body>
</html>
```
FILE: styles.css
```css
:root {
    --aqua: #9cdbdb;
    --aqua-hi: #c9f3f3;
    --aqua-lo: #5a8a8c;
    --green: #54cfae;
    --green-hi: #a4f0da;
    --green-lo: #2c6f60;
    --cream: #ffffcd;
    --mono: "Liberation Mono", "Courier New", monospace;
    --serif: "Liberation Serif", "Times New Roman", serif;
    --ui: "Open Sans", "Noto Sans", sans-serif;
}
* {
    box-sizing: border-box;
}
body {
    margin: 0;
    height: 100vh;
    display: flex;
    flex-direction: column;
    overflow: hidden;
    background: #000;
    color: #000;
    font: bold 15px/18px var(--mono);
}
button, input, select {
    font: inherit;
    color: inherit;
    margin: 0;
    padding: 0;
    border-radius: 0;
}
a {
    color: inherit;
    text-decoration: none;
}
u {
    text-underline-offset: 4px;
}
svg {
    display: block;
    flex: none;
}
ul {
    margin: 0;
    padding: 0;
    list-style: none;
}
.defs {
    position: absolute;
    width: 0;
    height: 0;
}
.raised {
    border: 2px solid;
    border-color: var(--aqua-hi) var(--aqua-lo) var(--aqua-lo) var(--aqua-hi);
    background: var(--aqua);
}
.sunken {
    border: 2px solid;
    border-color: var(--aqua-lo) var(--aqua-hi) var(--aqua-hi) var(--aqua-lo);
    background: var(--aqua);
}

/* Main window */
.editor {
    flex: 1;
    min-height: 0;
    display: flex;
    flex-direction: column;
    padding-left: 8px;
    background: linear-gradient(#c9cede, #a8b4cc);
}
.titlebar {
    height: 29px;
    margin-left: -8px;
    padding-left: 9px;
    display: flex;
    align-items: center;
    gap: 5px;
    border-top: 1px solid #333;
    background:
        radial-gradient(ellipse 230px 30px at 170px 50%, #b9c2c6e0, transparent),
        radial-gradient(ellipse 16px 14px at 436px 50%, #1f7a2d, transparent),
        radial-gradient(ellipse 14px 12px at 477px 50%, #1f7a2d, transparent),
        radial-gradient(ellipse 14px 12px at 523px 50%, #1f6a3d, transparent),
        radial-gradient(ellipse 24px 14px at 722px 80%, #d8d8dc, transparent),
        radial-gradient(ellipse 24px 14px at 828px 80%, #d8d8dc, transparent),
        radial-gradient(ellipse 24px 14px at 928px 80%, #d8c8cc, transparent),
        radial-gradient(ellipse 18px 12px at 1100px 70%, #c8524a, transparent),
        radial-gradient(ellipse 24px 14px at 1165px 80%, #d8d8dc, transparent),
        radial-gradient(ellipse 24px 14px at 1230px 80%, #d8d8dc, transparent),
        radial-gradient(ellipse 24px 14px at 1350px 80%, #d8d8dc, transparent),
        radial-gradient(ellipse 30px 14px at 1412px 60%, #5ea8d8, transparent),
        linear-gradient(90deg, #6c7c80, #3c5561 25%, #2b4a60 35%, #2b4a66 70%, #1f3a60);
    font: 13px/16px var(--ui);
}
.app-icon {
    width: 15px;
    height: 15px;
}
.controls {
    align-self: flex-start;
    margin-left: auto;
    display: flex;
    height: 20px;
    border: 1px solid #aab6c6;
    border-top: 0;
    border-radius: 0 0 0 5px;
}
.controls button {
    width: 28px;
    border: 0;
    border-right: 1px solid #8a97aa;
    background: #3a5068;
    display: flex;
    align-items: center;
    justify-content: center;
}
.controls button:last-child {
    width: 38px;
    padding-left: 8px;
}
.topbar {
    display: flex;
    height: 57px;
    background: var(--aqua);
    border-top: 1px solid #334;
}
.menubar {
    flex: 1;
    display: flex;
    align-items: center;
    gap: 18px;
    padding: 0 16px 0 14px;
    border: 2px solid;
    border-color: var(--aqua-hi) var(--aqua-lo) var(--aqua-lo) var(--aqua-hi);
    font: bold 14px/18px var(--serif);
}
.menubar .help {
    margin-left: auto;
}
.brand {
    width: 405px;
    padding: 4px 0 0 6px;
    border-left: 2px solid var(--aqua-hi);
    display: flex;
    overflow: hidden;
    white-space: nowrap;
}
.logo {
    display: flex;
    align-items: center;
    height: 46px;
    color: #11117a;
    font: italic bold 30px/46px "Liberation Sans", Arial, sans-serif;
}
.product {
    margin-left: 8px;
    display: flex;
    flex-direction: column;
    align-items: center;
    font-family: var(--serif);
}
.product strong {
    font-size: 24px;
    line-height: 26px;
}
.product em {
    font-size: 14px;
    line-height: 24px;
}
.stamp {
    margin-left: 8px;
    font-style: italic;
    line-height: 16px;
    text-align: center;
}
.workspace {
    flex: 1;
    min-height: 0;
    display: flex;
    border-top: 1px solid #222;
}

/* Sidebar */
.sidebar {
    width: 157px;
    flex: none;
    display: flex;
    flex-direction: column;
    background: var(--green);
    border: 1px solid var(--green-lo);
    border-right: 2px solid var(--green-hi);
    overflow: hidden;
    white-space: nowrap;
}
.job-info {
    padding: 1px 2px 2px;
    border-bottom: 2px solid var(--green-lo);
}
.job-line {
    height: 20px;
    padding-left: 2px;
    margin-bottom: -1px;
    border: 1px solid #000;
    background: var(--aqua);
    line-height: 20px;
}
.matrix-box {
    margin-top: 3px;
    padding: 1px 2px;
    border: 1px solid #000;
}
.matrix-box button {
    display: block;
    width: 100%;
    height: 22px;
    padding-left: 2px;
    text-align: left;
    line-height: 16px;
}
.layers {
    width: 126px;
    padding: 2px 3px 9px 4px;
    border: 2px solid;
    border-color: var(--green-lo) var(--green-hi) var(--green-hi) var(--green-lo);
    outline: 1px solid #143;
    outline-offset: -3px;
    display: flex;
    flex-direction: column;
    gap: 3px;
    font: bold 12px/14px var(--mono);
}
.group {
    padding: 1px 1px 1px 2px;
    background: #000;
}
.group label {
    height: 16px;
    display: flex;
    align-items: center;
    gap: 2px;
    --fill: var(--aqua);
    position: relative;
}
.group.signal label, .group label.orange { --fill: #ffc74d; }
.group label.white { --fill: #fff; }
.group label.mask { --fill: #00a57d; }
.group label.drill { --fill: #9bb0bb; }
.group label.rout { --fill: #dadada; }
.group input {
    appearance: none;
    flex: none;
    width: 14px;
    height: 14px;
    border: 2px solid #fff;
    outline: 2px solid #000;
    outline-offset: -4px;
    background: #fff;
}
.group input:checked {
    border-color: #0000a8;
}
.group i {
    flex: none;
    width: 14px;
    height: 14px;
}
.on-green { background: #439900; }
.on-red { background: #f00; }
.group span {
    flex: 1;
    min-width: 0;
    height: 14px;
    padding-left: 2px;
    overflow: hidden;
    background: var(--fill);
}
.group label svg {
    position: absolute;
    right: 3px;
}
.selected {
    margin: auto 2px 2px;
    height: 19px;
    padding-left: 2px;
    border: 1px solid #000;
    background: #ffc74d;
    font: bold 12px/17px var(--mono);
}

/* Board */
.board {
    flex: 1;
    min-width: 0;
    height: 100%;
    background: #000;
}
.c-green {
    fill: #439900;
    stroke: #439900;
    stroke-width: 0;
}
.c-gold {
    fill: #bf9800;
    stroke: #bf9800;
    stroke-width: 0;
}
.trace {
    fill: none;
    stroke-width: 70px;
    stroke-linecap: round;
}
.via {
    stroke-width: 92px;
    stroke-linecap: round;
}
.overview {
    width: 157px;
    flex: none;
    display: flex;
    flex-direction: column;
    justify-content: flex-end;
    border-left: 2px solid var(--green-lo);
    background: #000;
}
.coords {
    height: 45px;
    padding: 7px 3px;
    border: 2px solid;
    border-color: var(--green-hi) transparent var(--green-hi) var(--green);
    background: var(--green);
    line-height: 15px;
}

/* Command line and status */
.command {
    height: 36px;
    display: flex;
    align-items: center;
    border-top: 2px solid #000;
    border-bottom: 2px solid #000;
    background: var(--cream);
}
.tool {
    width: 32px;
    height: 32px;
    border: 2px solid;
    border-color: #fff #98967a #98967a #fff;
    outline: 1px solid #000;
    outline-offset: -1px;
    background: var(--cream);
    display: flex;
    align-items: center;
    justify-content: center;
}
.tool.active {
    border: 4px solid var(--green);
}
.xy {
    padding: 0 10px 0 3px;
    font-size: 13px;
}
.xy-input {
    width: 300px;
    height: 28px;
    border: 2px solid #8f8d74;
    background: var(--cream);
}
.command .opt {
    margin-left: auto;
    width: 69px;
    height: 32px;
}
.status {
    height: 31px;
    padding-left: 8px;
    border: 2px solid;
    border-color: #d9ffff #d9ffff #5f9c9c #d9ffff;
    outline: 1px solid #000;
    background: #b3ffff;
    text-align: center;
    font: bold 12px/26px var(--mono);
}

/* Drop-downs and scrollbars */
.opt {
    appearance: none;
    height: 30px;
    padding-left: 8px;
    border: 2px solid;
    border-color: var(--aqua-hi) var(--aqua-lo) var(--aqua-lo) var(--aqua-hi);
    background:
        linear-gradient(var(--aqua), var(--aqua)) right 8px center / 8px 3px no-repeat,
        linear-gradient(135deg, var(--aqua-hi) 50%, var(--aqua-lo) 50%) right 6px center / 12px 7px no-repeat,
        var(--aqua);
}
.opt.green {
    padding-left: 5px;
    border-color: var(--green-hi) var(--green-lo) var(--green-lo) var(--green-hi);
    background:
        linear-gradient(var(--green), var(--green)) right 4px center / 8px 3px no-repeat,
        linear-gradient(135deg, var(--green-hi) 50%, var(--green-lo) 50%) right 2px center / 12px 7px no-repeat,
        var(--green);
}
.opt.lime-bg {
    border-color: #8df88d #1a9a1a #1a9a1a #8df88d;
    background:
        linear-gradient(#1ee61e, #1ee61e) right 8px center / 8px 3px no-repeat,
        linear-gradient(135deg, #b0ffb0 50%, #128a12 50%) right 6px center / 12px 7px no-repeat,
        #1ee61e;
}
.scroll-y, .scroll-x {
    --face: var(--green);
    --hi: var(--green-hi);
    --lo: var(--green-lo);
    flex: none;
    display: flex;
    align-items: center;
    justify-content: space-between;
    border: 2px solid;
    border-color: var(--lo) var(--hi) var(--hi) var(--lo);
    background: #45ab93;
}
.scroll-y {
    width: 15px;
    flex-direction: column;
}
.scroll-x {
    height: 15px;
}
.scroll-y::before, .scroll-y::after, .scroll-x::before, .scroll-x::after {
    content: "";
    flex: none;
    width: 11px;
    height: 11px;
    background: var(--lo);
}
.scroll-y::before { clip-path: polygon(50% 0, 100% 100%, 0 100%, 50% 0, 50% 3px, 2px 9px, 9px 9px, 50% 3px); }
.scroll-y::after { clip-path: polygon(50% 100%, 100% 0, 0 0, 50% 100%, 50% 8px, 2px 2px, 9px 2px, 50% 8px); }
.scroll-x::before { clip-path: polygon(0 50%, 100% 100%, 100% 0, 0 50%, 3px 50%, 9px 2px, 9px 9px, 3px 50%); }
.scroll-x::after { clip-path: polygon(100% 50%, 0 100%, 0 0, 100% 50%, 8px 50%, 2px 2px, 2px 9px, 8px 50%); }
.scroll-y b, .scroll-x b {
    flex: 1;
    align-self: stretch;
    border: 2px solid;
    border-color: var(--hi) var(--lo) var(--lo) var(--hi);
    background: var(--face);
}
.scroll-x b.part {
    flex: 0 0 73%;
    margin-right: auto;
}
.histogram .scroll-y, .histogram .scroll-x {
    --face: var(--aqua);
    --hi: var(--aqua-hi);
    --lo: var(--aqua-lo);
    background: #86b8b8;
}

/* Glass windows */
.window {
    position: absolute;
    display: flex;
    flex-direction: column;
    padding: 0 6px 5px;
    border: 1px solid #d0d8d8;
    border-radius: 7px 7px 4px 4px;
    box-shadow: 0 0 0 1px #222, 0 2px 10px 2px #0009;
}
.win-title {
    height: 27px;
    flex: none;
    display: flex;
    align-items: center;
    gap: 5px;
    font: 12px/16px var(--ui);
}
.win-close {
    align-self: flex-start;
    margin-left: auto;
    width: 47px;
    height: 19px;
    border: 1px solid #e4f0f0;
    border-top: 0;
    border-radius: 0 0 5px 5px;
    background: #ffffff30;
    display: flex;
    align-items: center;
    justify-content: center;
}
.win-close.danger {
    background: linear-gradient(#d6a090, #c4573f 45%, #a81f10 50%, #d0553a);
}
.win-body {
    flex: 1;
    min-height: 0;
    display: flex;
    flex-direction: column;
    border: 1px solid #000;
    background: var(--green);
}
.listbox {
    flex: 1;
    min-width: 0;
    overflow: hidden;
    white-space: nowrap;
    border: 2px solid;
    border-color: var(--green-lo) var(--green-hi) var(--green-hi) var(--green-lo);
    padding: 3px 3px 0 2px;
}
.listbox li {
    height: 15px;
    margin-bottom: 3px;
    line-height: 15px;
    overflow: hidden;
}
.listbox .sel {
    background: #000;
    color: #7fcfc0;
}
.icon-row {
    display: flex;
    gap: 5px;
}
.icon-row.end {
    justify-content: flex-end;
}
.icon {
    width: 29px;
    height: 29px;
    flex: none;
    position: relative;
    display: flex;
    align-items: center;
    justify-content: center;
}
.tagged span {
    position: absolute;
    top: 3px;
    left: 0;
    right: 0;
    font: 11px/10px var(--serif);
}
.tagged.mid span { top: 8px; }
.tagged.red { color: #f01818; }
.tagged.lime { color: #1ee61e; }
.tagged span { color: #000; }
.tagged.wide { width: 33px; }
.tagged.wide span { font-size: 9px; }
.pressed { border-color: #a01818; background: #c04040; }
.pressed svg { background: var(--aqua); }

/* Results viewer */
.viewer {
    left: 201px;
    top: 260px;
    width: 509px;
    height: 778px;
    background: linear-gradient(#6a6a6a, #505050 20%, #2a2a2a 40%, #cfcfcf 45%, #222 52%, #1a1a1a 92%, #8a9090);
}
.viewer .win-title {
    background: linear-gradient(90deg, #a8a8a8, #9a9a9a 20%, #3a3a3a 25%, #333 30%, #4c7230 32%, #4c7230 62%, #222 65%, #777);
}
.viewer-head {
    padding: 2px;
    height: 30px;
    background: var(--aqua);
    border-bottom: 2px solid #000;
    font: bold 14px/20px var(--serif);
    text-align: center;
}
.viewer-head div {
    height: 25px;
    border: 2px solid;
    border-color: var(--aqua-hi) var(--green-lo) var(--green-lo) var(--aqua-hi);
    background: var(--green);
}
.viewer-cols {
    flex: 1;
    min-height: 0;
    display: grid;
    grid-template-columns: 172px 1fr;
}
.viewer-left, .viewer-right {
    min-width: 0;
    min-height: 0;
    display: flex;
    flex-direction: column;
}
.viewer-left {
    border-right: 2px solid #000;
}
.left-tabs {
    height: 31px;
    display: flex;
    border-bottom: 1px solid #000;
}
.left-tabs div {
    padding: 2px;
}
.left-tabs button {
    height: 26px;
    padding: 0 2px;
    font-weight: normal;
    font-style: italic;
}
.left-tabs strong {
    flex: 1;
    border: solid #000;
    border-width: 0 2px;
    background: var(--aqua);
    font-style: italic;
    line-height: 30px;
    text-align: center;
}
.list-area {
    flex: 1;
    min-height: 0;
    display: flex;
    gap: 4px;
}
.viewer .scroll-x {
    margin: 3px 19px 2px 0;
}
.replace {
    padding: 1px 2px 1px 6px;
    border: 1px solid #000;
}
.replace .opt {
    display: block;
    width: 100%;
}
.right-tabs {
    height: 33px;
    display: flex;
    align-items: center;
    background: var(--aqua);
}
.cats {
    width: 206px;
    height: 28px;
    font-style: italic;
}
.right-tabs label {
    flex: 1;
    padding-left: 1px;
}
.right-tabs .opt {
    width: 62px;
    height: 28px;
    padding-left: 4px;
}
.nav-row {
    display: flex;
    align-items: center;
    gap: 3px;
    height: 27px;
}
.nav-row button {
    width: 45px;
    height: 24px;
    line-height: 18px;
}
.nav-row .default {
    width: 53px;
    outline: 2px solid #000;
    outline-offset: -1px;
}
.nav-row input {
    flex: 1;
    min-width: 0;
    height: 23px;
    padding-left: 4px;
    border-color: var(--green-lo) var(--green-hi) var(--green-hi) var(--green-lo);
    background: var(--green);
}
.nav-row label {
    padding: 0 2px;
}
.zoom-row {
    display: flex;
    align-items: center;
    height: 34px;
}
.boxed {
    height: 33px;
    padding: 1px 1px 1px 4px;
    border: 1px solid #000;
    display: flex;
    align-items: center;
}
.boxed .opt {
    width: 117px;
    height: 29px;
    padding-left: 5px;
}
.boxed.sv {
    padding-left: 0;
    background: var(--aqua);
}
.boxed.sv .opt {
    width: 67px;
    height: 31px;
}
.show-all {
    display: flex;
    align-items: center;
    gap: 3px;
    padding: 0 0 6px 4px;
}
.show-all input {
    appearance: none;
    width: 13px;
    height: 13px;
    border: 1px solid;
    border-color: var(--green-hi) var(--green-lo) var(--green-lo) var(--green-hi);
}
.viewer .icon-row {
    height: 33px;
    align-items: center;
    padding-right: 2px;
}
.viewer-msg {
    margin: 0;
    height: 22px;
    padding-left: 52px;
    border-top: 2px solid #000;
    border-bottom: 2px solid #000;
    font: inherit;
}
.viewer-erf {
    height: 21px;
    padding-left: 1px;
    border-bottom: 1px solid #000;
    background: var(--cream);
    line-height: 20px;
}
.viewer-foot {
    height: 34px;
    padding: 2px;
    display: flex;
    align-items: center;
    gap: 5px;
    background: var(--aqua);
}
.viewer-foot .close {
    flex: 1;
    height: 30px;
}

/* Results histogram */
.histogram {
    left: 1235px;
    top: 304px;
    width: 482px;
    height: 575px;
    background: linear-gradient(100deg, #5a8a2a, #3f7a12 60%, #7f9a88 75%, #304048);
}
.histogram .win-title {
    background: linear-gradient(90deg, #8fae6e, #87a868 22%, #3f7a12 29%, #2233c8 31%, #2233c8 39%, #4b9a12 41%, #4b8a12 62%, #93b6b2 65%, #93b6b2);
}
.histogram .win-body {
    padding: 5px 3px 0;
}
.hist-top {
    display: flex;
    gap: 3px;
    height: 288px;
}
.hist-left {
    width: 104px;
    display: flex;
    flex-direction: column;
    border: 2px solid #000;
    border-right-width: 1px;
    background: var(--aqua);
}
.hist-radios {
    height: 136px;
    border-bottom: 1px solid #000;
}
.hist-radios label {
    height: 27px;
    display: flex;
    align-items: center;
    gap: 7px;
    padding-left: 7px;
}
input[type="radio"] {
    appearance: none;
    flex: none;
    width: 10px;
    height: 10px;
    border: 2px solid;
    border-color: var(--aqua-hi) var(--aqua-lo) var(--aqua-lo) var(--aqua-hi);
    transform: rotate(45deg);
}
input[type="radio"]:checked {
    border-color: var(--aqua-lo) #fff #fff var(--aqua-lo);
    background: #c8004c;
}
.hist-list {
    flex: 1;
    display: flex;
    gap: 4px;
}
.histogram .listbox {
    border-color: var(--aqua-lo) var(--aqua-hi) var(--aqua-hi) var(--aqua-lo);
}
.hist-left .icon-row {
    padding: 2px;
}
.hist-right {
    flex: 1;
    min-width: 0;
    display: flex;
    flex-direction: column;
    border: 1px solid #000;
    background: var(--aqua);
}
.chart {
    height: 221px;
    display: flex;
    flex-direction: column;
}
.chart-title {
    align-self: center;
    margin-top: 2px;
    height: 22px;
    padding: 0 2px;
    border: 1px solid #000;
    background: #b3ffff;
    box-shadow: 2px 2px 0 #777;
    font-style: italic;
    line-height: 24px;
}
.bars {
    flex: 1;
    display: flex;
    align-items: flex-end;
    padding-left: 4px;
    border-bottom: 3px solid #000;
}
.bar {
    width: 55px;
    text-align: center;
    line-height: 15px;
}
.bar i {
    display: block;
    margin-right: -1px;
    border: 1px solid #000;
    border-bottom: 0;
    background: #ff1a1a;
}
.bar.current span {
    color: #e01010;
}
.ranges {
    display: flex;
    padding: 2px 0 8px 4px;
}
.ranges div {
    width: 55px;
    height: 29px;
    padding: 2px 0 0 9px;
    border: 1px solid #000;
    border-right: 0;
    background: #ff1a1a;
    line-height: 14px;
}
.ranges div:last-child {
    width: 56px;
    border-right: 1px solid #000;
}
.ranges span {
    padding-left: 9px;
}
.hist-opts {
    flex: 1;
    min-height: 0;
    display: flex;
    gap: 4px;
}
.hist-opts .listbox {
    flex: 0 0 92px;
}
.resolution {
    flex: 1;
    display: flex;
    flex-direction: column;
    padding-left: 3px;
    margin-left: -3px;
    border: 1px solid #000;
    border-right-width: 2px;
    border-bottom-width: 2px;
}
.resolution label {
    text-align: center;
}
.resolution output {
    padding: 6px 0 2px 3px;
}
.resolution input {
    appearance: none;
    height: 15px;
    border: 2px solid;
    border-color: var(--aqua-lo) var(--aqua-hi) var(--aqua-hi) var(--aqua-lo);
    background: #86b8b8;
}
.resolution input::-webkit-slider-thumb {
    appearance: none;
    width: 28px;
    height: 11px;
    border: 1px solid;
    border-color: var(--aqua-hi) var(--aqua-lo) var(--aqua-lo) var(--aqua-hi);
    background: linear-gradient(90deg, transparent 13px, var(--aqua-lo) 13px, var(--aqua-lo) 14px, transparent 14px), var(--aqua);
}
.sash {
    height: 8px;
    border-top: 2px solid var(--green);
    display: flex;
    justify-content: flex-end;
    background: linear-gradient(var(--green) 3px, var(--green-lo) 3px, var(--green-lo) 4px, var(--green-hi) 4px, var(--green-hi) 5px, var(--green) 5px);
}
.sash i {
    width: 9px;
    height: 7px;
    margin-right: 8px;
    border: 1px solid var(--green-hi);
    background: var(--green);
}
.hist-map {
    flex: 1;
    display: flex;
    align-items: center;
    justify-content: center;
    border: 2px solid;
    border-color: var(--green-lo) var(--green-hi) var(--green-hi) var(--green-lo);
    outline: 1px solid #000;
    outline-offset: -3px;
}
.hist-foot {
    height: 44px;
    padding: 2px 3px 4px 2px;
    display: flex;
    gap: 4px;
    align-items: stretch;
}
.hist-foot .icon {
    height: 38px;
}
.hist-foot .icon:nth-last-child(-n+2) {
    width: 38px;
}
.hist-foot .tagged span {
    top: 8px;
}
.hist-info {
    flex: 1;
    height: 41px;
    padding-left: 3px;
    border: 1px solid #000;
    background: var(--aqua);
    line-height: 39px;
}
.hist-close {
    margin: 0 -3px;
    padding: 1px 2px;
    border-top: 1px solid #000;
    background: var(--aqua);
}
.hist-close button {
    display: block;
    width: 100%;
    height: 25px;
    line-height: 18px;
}

/* Checklist editor */
.checklist {
    left: 1529px;
    right: -9px;
    top: 79px;
    height: 724px;
    background: linear-gradient(90deg, #8fb0ae, #b7c9c0);
    font: bold 14px/18px var(--serif);
}
.checklist .win-title {
    height: 28px;
    background: linear-gradient(90deg, #8fb0ae, #a8b8a8 14%, #eae6ba 22%, #e8e4b8);
}
.checklist .win-body {
    background: var(--aqua);
}
.check-menu {
    align-self: flex-start;
    display: flex;
    align-items: center;
    gap: 17px;
    height: 34px;
    padding: 0 12px;
    outline: 1px solid #000;
}
.check-name {
    height: 21px;
    border: 1px solid #000;
    line-height: 19px;
    text-align: center;
    padding-right: 4px;
}
.check-main {
    height: 607px;
    display: flex;
    gap: 4px;
    padding: 2px 0 0 2px;
    background: var(--green);
}
.check-list {
    flex: 1;
    min-width: 0;
    margin-right: 4px;
    padding-right: 4px;
    border: 1px solid var(--green-lo);
    border-right: 2px solid var(--green-hi);
    overflow: hidden;
}
.check-main .scroll-y {
    width: 16px;
    margin-right: 2px;
}
.check {
    height: 119px;
    padding-top: 1px;
    display: flex;
    flex-direction: column;
    justify-content: space-between;
    background: var(--aqua);
    border: solid #000;
    border-width: 0 1px 3px 0;
}
.check-head {
    height: 30px;
    display: flex;
    align-items: center;
    gap: 4px;
    padding: 0 2px 0 3px;
}
.check-head > svg {
    margin: 0 0 0 14px;
}
.check-head b {
    flex: 1;
    min-width: 0;
    overflow: hidden;
    white-space: nowrap;
    font-size: 14px;
}
.check-head input[type="checkbox"] {
    appearance: none;
    align-self: flex-start;
    width: 13px;
    height: 13px;
    margin: 5px 0 0;
    flex: none;
    border: 1px solid;
    border-color: var(--aqua-lo) var(--aqua-hi) var(--aqua-hi) var(--aqua-lo);
}
.check-head input[type="checkbox"]:checked {
    background:
        linear-gradient(45deg, transparent 42%, #b8005a 42%, #b8005a 62%, transparent 62%) 0 4px / 6px 7px no-repeat,
        linear-gradient(-45deg, transparent 38%, #b8005a 38%, #b8005a 60%, transparent 60%) 2px 0 / 9px 11px no-repeat;
}
.erf {
    width: 44px;
    height: 29px;
    font: 15px/18px var(--mono);
}
.check-head input[type="text"] {
    width: 104px;
    height: 29px;
    padding: 0 0 8px 4px;
    font: 15px/18px var(--mono);
}
.check-buttons {
    display: flex;
    gap: 5px;
    padding: 0 2px;
}
.check-buttons button {
    flex: 1;
    height: 22px;
    line-height: 16px;
}
.check-status {
    height: 30px;
    display: flex;
    align-items: center;
    gap: 5px;
    padding-left: 3px;
}
.check-status p {
    margin: 0 auto 0 0;
    font: 15px/15px var(--mono);
    text-align: center;
    white-space: nowrap;
}
.run {
    width: 28px;
    height: 28px;
    flex: none;
    display: flex;
    align-items: center;
    justify-content: center;
    border-color: var(--green-hi) var(--green-lo) var(--green-lo) var(--green-hi);
    background: var(--green);
}
.check-status mark {
    align-self: stretch;
    width: 16px;
    margin-left: -3px;
    border: 1px solid #000;
    background: #ff1a1a;
    line-height: 28px;
    text-align: center;
}
.check-msg {
    height: 21px;
    padding-left: 2px;
    border-top: 1px solid #000;
    background: var(--cream);
    font: 15px/20px var(--mono);
}
.check-close {
    padding: 3px;
}
.check-close button {
    display: block;
    width: 100%;
    height: 24px;
    line-height: 18px;
}

/* Measure popup */
.measure {
    left: 1728px;
    right: -8px;
    top: 244px;
    height: 260px;
    background: linear-gradient(#b7c9c0, #9fc4bc);
}
.measure .win-title {
    height: 28px;
    background: linear-gradient(90deg, #8fb0ae, #dfe0b8 30%, #dcdcb4 65%, #9cdbdb 68%, #d06060 74%, #d07070 82%, #8fb8a8 90%);
}
.measure-head {
    height: 17px;
    background: var(--aqua);
    line-height: 18px;
    text-align: center;
    padding-right: 6px;
}
.measure-list label {
    height: 29px;
    display: flex;
    align-items: center;
    gap: 6px;
    padding-left: 8px;
    border: solid #000;
    border-width: 2px 1px 0;
    background: var(--aqua);
    white-space: nowrap;
}
.measure-list label:last-child {
    border-bottom: 2px solid #000;
}
.measure-close {
    margin-top: auto;
    padding: 2px;
    border-top: 1px solid #000;
}
.measure-close button {
    display: block;
    width: 100%;
    height: 24px;
    line-height: 18px;
}

/* Taskbar */
.taskbar {
    height: 39px;
    flex: none;
    display: flex;
    align-items: center;
    border-top: 1px solid #8a97a8;
    background: linear-gradient(#3c4a5e, #1d2c44 30%, #1c3350);
    overflow: hidden;
    position: relative;
}
.start {
    width: 60px;
    padding-left: 8px;
    border: 0;
    background: none;
}
.tasks {
    display: flex;
    gap: 4px;
}
.tasks button {
    width: 58px;
    height: 38px;
    border: 1px solid #10151f;
    border-radius: 3px;
    box-shadow: inset 0 0 0 1px #8490a2;
    background: linear-gradient(135deg, #8d95a3, #56606f 45%, #39434f 50%, #3a4d66);
    display: flex;
    align-items: center;
    justify-content: center;
}
.tasks .on {
    background: linear-gradient(135deg, #dcdce2, #a5a7b2 50%, #94959f 52%, #d5d2da);
}
.tray {
    margin-left: auto;
    display: flex;
    align-items: center;
    gap: 8px;
    color: #fff;
    font: 12px/18px var(--ui);
}
.tray time {
    width: 70px;
    margin-left: 6px;
    text-align: center;
}
.peek {
    width: 14px;
    height: 38px;
    border: 1px solid #7a8698;
    background: linear-gradient(135deg, #6a7484, #2c3a4c);
}
```
